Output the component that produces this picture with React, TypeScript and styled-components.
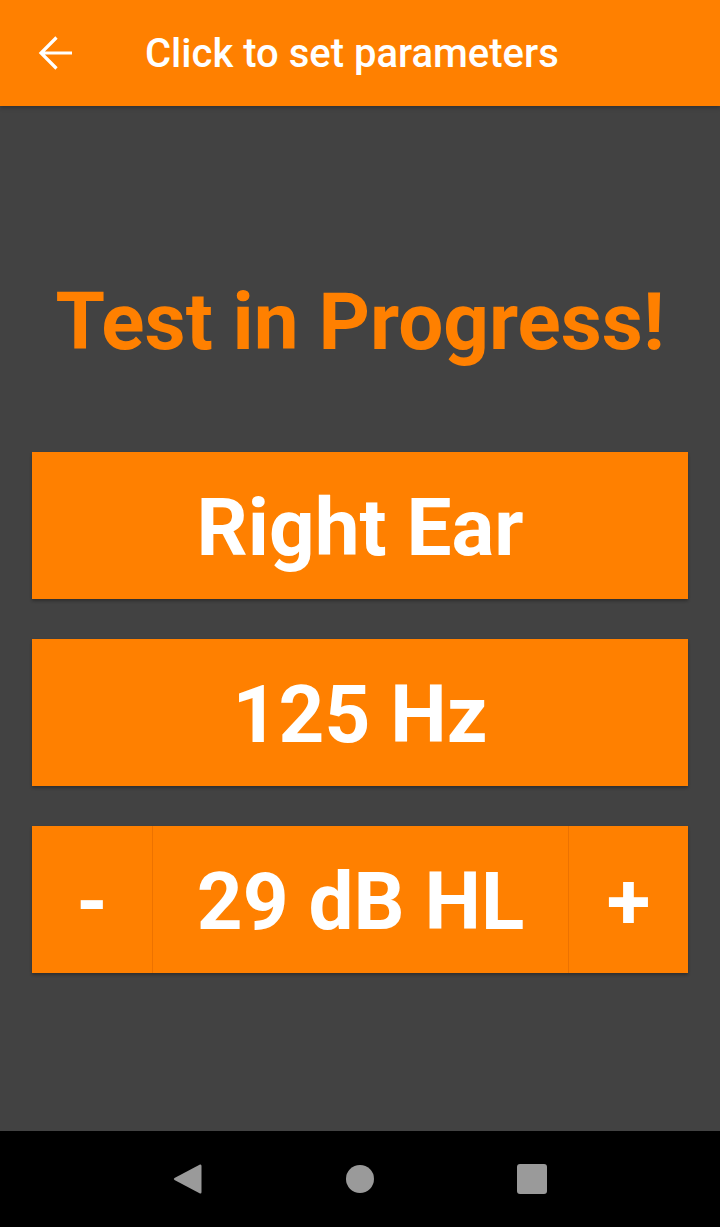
import * as React from "react";
import styled, { createGlobalStyle } from "styled-components";

const ORANGE = "#ff8000";

const Global = createGlobalStyle`
  html, body {
    margin: 0;
    padding: 0;
    background: #424242;
  }
  body {
    font-family: Roboto, "Noto Sans", sans-serif;
  }
`;

const Screen = styled.div`
  display: flex;
  flex-direction: column;
  height: 100vh;
  overflow: hidden;
`;

const Toolbar = styled.header`
  flex: 0 0 106px;
  display: flex;
  align-items: center;
  background: ${ORANGE};
  color: #fff;
  box-shadow: 0 2px 4px rgba(0, 0, 0, 0.25);
  position: relative;
  z-index: 1;
`;

const BackButton = styled.button`
  width: 48px;
  height: 48px;
  margin-left: 32px;
  padding: 0;
  border: 0;
  background: transparent;
  display: flex;
  align-items: center;
  justify-content: center;
  cursor: pointer;
`;

const ToolbarTitle = styled.h1`
  margin: 2px 0 0 65px;
  font-size: 40px;
  font-weight: 500;
  letter-spacing: 0;
  line-height: 1;
`;

const Content = styled.main`
  flex: 1;
  display: flex;
  flex-direction: column;
  align-items: stretch;
  padding: 176px 32px 0;
  background: #424242;
`;

const Heading = styled.h2`
  margin: 0 0 90px;
  text-align: center;
  color: ${ORANGE};
  font-size: 80px;
  font-weight: 700;
  line-height: 80px;
`;

const Stack = styled.div`
  display: flex;
  flex-direction: column;
  gap: 40px;
`;

const Panel = styled.div`
  height: 147px;
  display: flex;
  align-items: stretch;
  background: ${ORANGE};
  box-shadow: 0 2px 3px rgba(0, 0, 0, 0.3);
`;

const Cell = styled.button<{ $side?: boolean }>`
  flex: ${(p) => (p.$side ? "0 0 120px" : "1")};
  display: flex;
  align-items: center;
  justify-content: center;
  padding: 4px 0 0;
  border: 0;
  background: transparent;
  color: #fff;
  font-family: Roboto, "Noto Sans", sans-serif;
  font-size: 80px;
  font-weight: 700;
  line-height: 1;
  cursor: pointer;

  & + & {
    border-left: 1px solid rgba(200, 90, 0, 0.35);
  }
`;

const NavBar = styled.nav`
  flex: 0 0 96px;
  display: flex;
  align-items: center;
  justify-content: center;
  background: #000;
`;

const NavSlot = styled.div`
  width: 172px;
  display: flex;
  justify-content: center;
`;

const Home = styled.div`
  width: 28px;
  height: 28px;
  border-radius: 50%;
  background: #9a9a9a;
`;

const Recents = styled.div`
  width: 30px;
  height: 30px;
  border-radius: 3px;
  background: #9a9a9a;
`;

const BackArrow = () => (
  <svg width="48" height="48" viewBox="0 0 48 48" fill="none">
    <path
      d="M40 24H9M24.5 8.5 9 24 24.5 39.5"
      stroke="#fff"
      strokeWidth="3.2"
      strokeLinecap="butt"
      strokeLinejoin="miter"
    />
  </svg>
);

const Triangle = () => (
  <svg width="30" height="32" viewBox="0 0 30 32">
    <path d="M27 1.5 Q28.5 1 28.5 3 V29 Q28.5 31 27 30.5 L1.5 17 Q0 16 1.5 15 Z" fill="#9a9a9a" />
  </svg>
);

export default function App() {
  const [level, setLevel] = React.useState(29);

  return (
    <Screen>
      <Global />
      <Toolbar>
        <BackButton aria-label="Back">
          <BackArrow />
        </BackButton>
        <ToolbarTitle>Click to set parameters</ToolbarTitle>
      </Toolbar>
      <Content>
        <Heading>Test in Progress!</Heading>
        <Stack>
          <Panel>
            <Cell>Right Ear</Cell>
          </Panel>
          <Panel>
            <Cell>125 Hz</Cell>
          </Panel>
          <Panel>
            <Cell $side onClick={() => setLevel((v) => v - 1)}>-</Cell>
            <Cell>{level} dB HL</Cell>
            <Cell $side onClick={() => setLevel((v) => v + 1)}>+</Cell>
          </Panel>
        </Stack>
      </Content>
      <NavBar>
        <NavSlot>
          <Triangle />
        </NavSlot>
        <NavSlot>
          <Home />
        </NavSlot>
        <NavSlot>
          <Recents />
        </NavSlot>
      </NavBar>
    </Screen>
  );
}
